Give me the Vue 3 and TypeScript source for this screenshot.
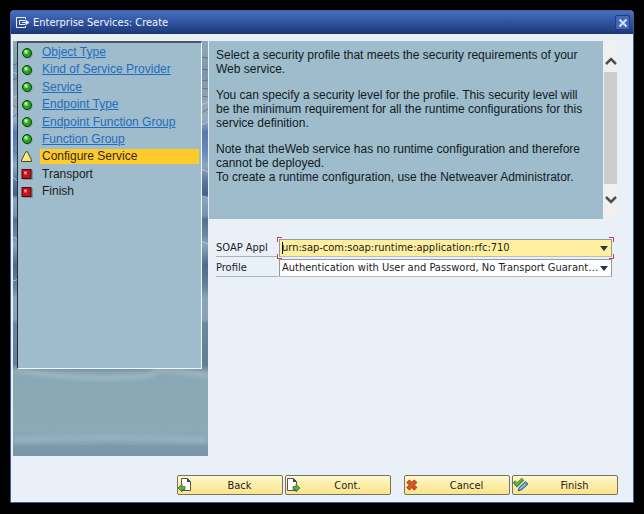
<script setup lang="ts">
import { ref } from 'vue'

type Status = 'done' | 'current' | 'open'
interface Step { label: string; status: Status }

const steps: Step[] = [
  { label: 'Object Type', status: 'done' },
  { label: 'Kind of Service Provider', status: 'done' },
  { label: 'Service', status: 'done' },
  { label: 'Endpoint Type', status: 'done' },
  { label: 'Endpoint Function Group', status: 'done' },
  { label: 'Function Group', status: 'done' },
  { label: 'Configure Service', status: 'current' },
  { label: 'Transport', status: 'open' },
  { label: 'Finish', status: 'open' },
]

const soapOptions: string[] = ['urn:sap-com:soap:runtime:application:rfc:710']
const profileOptions: string[] = ['Authentication with User and Password, No Transport Guarantee']
const soap = ref(soapOptions[0])
const profile = ref(profileOptions[0])
</script>

<template>
  <main class="window">
    <header class="titlebar">
      <svg class="title-icon" width="14" height="12" viewBox="0 0 14 12" fill="none" stroke="#e8eefa" aria-hidden="true">
        <path d="M9.500 2V.5H.5v10h9V9" />
        <path d="M9 3.500H3.500v4H9" />
        <path d="M6 5.500h5" />
        <path d="M9.500 2.500l4 3-4 3z" fill="#e8eefa" stroke="none" />
      </svg>
      <h1>Enterprise Services: Create</h1>
      <button class="close" type="button" aria-label="Close">
        <svg width="8" height="8" viewBox="0 0 8 8" stroke="#d5e2ff" stroke-width="2" aria-hidden="true"><path d="M0.500 0.500l7 7M7.500 0.500l-7 7" /></svg>
      </button>
    </header>

    <div class="body">
      <aside class="side">
        <svg class="waves" viewBox="0 0 195 415" preserveAspectRatio="none" aria-hidden="true">
          <defs>
            <linearGradient id="sea" x1="0" y1="0" x2="0" y2="1">
              <stop offset="0" stop-color="#8fa9b8" />
              <stop offset="0.08" stop-color="#8095a8" />
              <stop offset="0.15" stop-color="#95a6b6" />
              <stop offset="0.19" stop-color="#9aabbb" />
              <stop offset="0.22" stop-color="#5a78b0" />
              <stop offset="0.27" stop-color="#6c8abb" />
              <stop offset="0.3" stop-color="#8fa9bd" />
              <stop offset="0.34" stop-color="#5a7499" />
              <stop offset="0.37" stop-color="#46608c" />
              <stop offset="0.38" stop-color="#8aa4b8" />
              <stop offset="0.42" stop-color="#7893ae" />
              <stop offset="0.43" stop-color="#56718f" />
              <stop offset="0.47" stop-color="#6d89a6" />
              <stop offset="0.49" stop-color="#8ba6b9" />
              <stop offset="0.54" stop-color="#4f6a8c" />
              <stop offset="0.59" stop-color="#64809b" />
              <stop offset="0.62" stop-color="#8ca6b6" />
              <stop offset="0.67" stop-color="#88a1b3" />
              <stop offset="0.68" stop-color="#6c879c" />
              <stop offset="0.78" stop-color="#627e93" />
              <stop offset="0.8" stop-color="#8aa7b5" />
              <stop offset="0.94" stop-color="#8ca9b6" />
              <stop offset="1" stop-color="#7897a8" />
            </linearGradient>
            <filter id="soft" x="-10%" y="-100%" width="120%" height="300%"><feGaussianBlur stdDeviation="2" /></filter>
          </defs>
          <rect width="195" height="415" fill="url(#sea)" />
          <g stroke="#4a5f7c" opacity=".6">
            <path d="M0 24l6-2M0 39l6-3M0 64l6 4M0 76l6-5M0 109l6 5M0 150l6 4" />
            <path d="M188 16l7 1M188 28l7 1M188 40l7-1M188 47l7 1M188 55l7 1M188 72l7-4" />
          </g>
          <g stroke="#c0d0dd" opacity=".8">
            <path d="M0 31l6 3M0 57l6-3M0 136l6 6M0 196l6 3M0 240l6-2" />
            <path d="M188 64l7-3M188 84l7-3M188 128l7 3M188 155l7 2M188 200l7 3" />
          </g>
          <g fill="none" filter="url(#soft)">
            <path d="M0 328Q50 338 96 337T140 332M140 329Q170 329 195 335" stroke="#a9becb" stroke-width="4" opacity=".8" />
            <path d="M0 399Q90 395 195 399" stroke="#9bb6c5" stroke-width="6" opacity=".8" />
          </g>
          <rect y="404" width="195" height="11" fill="#7896a8" opacity=".5" />
        </svg>
        <nav class="steps" aria-label="Wizard steps">
          <ul>
            <li v-for="s in steps" :key="s.label">
              <svg width="12" height="12" viewBox="0 0 12 12" aria-hidden="true">
                <template v-if="s.status === 'done'">
                  <circle cx="7" cy="7" r="4.500" fill="#58706d" opacity=".6" />
                  <circle cx="6" cy="6" r="4.500" fill="#24a31f" stroke="#153c16" />
                  <circle cx="5.200" cy="5" r="2.300" fill="#6be055" />
                  <circle cx="4.800" cy="4.500" r="1" fill="#edffe5" />
                </template>
                <template v-else-if="s.status === 'current'">
                  <path d="M5 .7h1.500l4 8.300v1.500h-10V9z" fill="#f9e66b" stroke="#4d482b" />
                  <path d="M5.300 2.500L3 8" stroke="#fff9c2" />
                </template>
                <template v-else>
                  <rect x="2" y="2" width="10" height="10" fill="#667983" opacity=".6" />
                  <rect x="1" y="1.500" width="9" height="9" fill="#c71318" stroke="#4d080c" />
                  <rect x="3" y="3.500" width="3" height="3" fill="#f16b6b" />
                  <rect x="3.500" y="4" width="1" height="1" fill="#fff" />
                </template>
              </svg>
              <a v-if="s.status === 'done'" href="#">{{ s.label }}</a>
              <span v-else :class="{ current: s.status === 'current' }">{{ s.label }}</span>
            </li>
          </ul>
        </nav>
      </aside>

      <section class="content">
        <div class="info">
          <div class="text">
            <p>Select a security profile that meets the security requirements of your<br>Web service.</p>
            <p>You can specify a security level for the profile. This security level will<br>be the minimum requirement for all the runtime configurations for this<br>service definition.</p>
            <p>Note that theWeb service has no runtime configuration and therefore<br>cannot be deployed.<br>To create a runtime configuration, use the Netweaver Administrator.</p>
          </div>
          <div class="scroll">
            <button type="button" aria-label="Scroll up">
              <svg width="12" height="8" viewBox="0 0 12 8" fill="none" stroke="#505050" stroke-width="2.500" aria-hidden="true"><path d="M1 7l5-5 5 5" /></svg>
            </button>
            <div class="thumb"></div>
            <button type="button" aria-label="Scroll down">
              <svg width="12" height="8" viewBox="0 0 12 8" fill="none" stroke="#505050" stroke-width="2.500" aria-hidden="true"><path d="M1 1l5 5 5-5" /></svg>
            </button>
          </div>
        </div>

        <form class="form" @submit.prevent>
          <div class="row">
            <label for="soap">SOAP Appl</label>
            <div class="field focused">
              <select id="soap" v-model="soap"><option v-for="o in soapOptions" :key="o">{{ o }}</option></select>
              <svg class="arrow" width="8" height="5" viewBox="0 0 8 5" aria-hidden="true"><path d="M0 0h8L4 5z" fill="#26384a" /></svg>
              <i class="corner tl"></i><i class="corner tr"></i><i class="corner bl"></i><i class="corner br"></i>
              <i class="caret"></i>
            </div>
          </div>
          <div class="row">
            <label for="profile">Profile</label>
            <div class="field">
              <select id="profile" v-model="profile"><option v-for="o in profileOptions" :key="o">{{ o }}</option></select>
              <svg class="arrow" width="8" height="5" viewBox="0 0 8 5" aria-hidden="true"><path d="M0 0h8L4 5z" fill="#26384a" /></svg>
            </div>
          </div>
        </form>
      </section>
    </div>

    <footer class="actions">
      <div class="pair">
        <button type="button">
          <svg width="16" height="16" viewBox="0 0 16 16" aria-hidden="true">
            <path d="M3.500 1.500h6l3 3v9h-9z" fill="#fff" stroke="#555" /><path d="M9 1v4h4z" fill="#444" />
            <path d="M0 11l4-4v2.500h3v3H4V15z" fill="#68a93f" stroke="#35782a" stroke-width=".8" />
          </svg><span>Back</span>
        </button>
        <button type="button">
          <svg width="16" height="16" viewBox="0 0 16 16" aria-hidden="true">
            <path d="M1.500 1.500h6l3 3v9h-9z" fill="#fff" stroke="#555" /><path d="M7 1v4h4z" fill="#444" />
            <path d="M14 11l-4-4v2.500H7v3h3V15z" fill="#68a93f" stroke="#35782a" stroke-width=".8" />
          </svg><span>Cont.</span>
        </button>
      </div>
      <div class="pair">
        <button type="button">
          <svg width="16" height="16" viewBox="0 0 16 16" aria-hidden="true">
            <path d="M2.800 4l8 8M10.800 4l-8 8" stroke="#a63d19" stroke-width="4.400" />
            <path d="M3.300 4.500l7 7M10.300 4.500l-7 7" stroke="#d95828" stroke-width="3" />
          </svg><span>Cancel</span>
        </button>
        <button type="button">
          <svg width="16" height="16" viewBox="0 0 16 16" fill="none" aria-hidden="true">
            <path d="M1 4.500l3 3.500 6-6" stroke="#397e30" stroke-width="3.500" /><path d="M1.500 4.500L4 7.500 9.500 2" stroke="#69b04a" stroke-width="2" />
            <path d="M5 14l1.500-4 6-5.500 2.500 2.500-6 5.500z" fill="#5f9fd0" stroke="#2c638e" /><path d="M7.500 11.500l5-4.500" stroke="#a9d2ee" />
          </svg><span>Finish</span>
        </button>
      </div>
    </footer>
  </main>
</template>

<style>
html, body, #app { height: 100%; }
body { margin: 0; background: #000; }
#app { box-sizing: border-box; padding: 10px 10px 11px; }
</style>

<style scoped>
* { box-sizing: border-box; }
.window {
  display: flex;
  flex-direction: column;
  min-height: 100%;
  border: 1px solid #3d5f9f;
  border-radius: 4px 4px 0 0;
  background: #e9f0f8;
  color: #1c1c1c;
  font: 11px/16px "DejaVu Sans Condensed", "DejaVu Sans", sans-serif;
  overflow: hidden;
}
.titlebar {
  display: flex;
  flex: none;
  align-items: center;
  gap: 3px;
  height: 23px;
  padding: 0 3px 0 5px;
  background: linear-gradient(#4a6fbd, #355ba9 35%, #26458c 75%, #1c3671);
  color: #f1f5ff;
}
h1 { flex: 1; margin: 0; font-size: 11px; font-weight: 400; }
.close {
  display: grid;
  place-items: center;
  width: 15px;
  height: 15px;
  padding: 0;
  border: 1px solid #1f3c80;
  border-radius: 2px;
  background: #4468b4;
}
.body { display: flex; flex: none; gap: 1px; padding: 7px 0 0 2px; }
.side { position: relative; width: 195px; height: 415px; padding: 0 6px 0 4px; }
.waves { position: absolute; inset: 0; width: 100%; height: 100%; }
.steps {
  position: relative;
  height: 328px;
  border: 1px solid #f2f6f8;
  border-top: 2px solid #4b5864;
  border-left-color: #26303c;
  background: #9ebccc;
  font: 12px/15px "Liberation Sans", Arial, sans-serif;
}
ul { display: grid; grid-auto-rows: 15px; align-content: space-between; height: 156px; margin: 0; padding: 2px 2px 0 3px; list-style: none; }
li { display: flex; align-items: center; gap: 7px; }
li svg { flex: none; }
li a, li span { flex: 1; padding-left: 2px; white-space: nowrap; }
li a { color: #226cc0; }
.current { background: #ffca2c; color: #322a12; }
.content { flex: 1; min-width: 0; }
.info { display: flex; height: 178px; padding-right: 15px; }
.text { flex: 1; padding: 7px; background: #9ebccb; color: #111a22; font: 12px/14px "Liberation Sans", Arial, sans-serif; white-space: nowrap; }
p { margin: 0 0 12px; }
.scroll { display: flex; flex-direction: column; width: 15px; background: #f0f0f0; }
.scroll button { display: grid; place-items: center; height: 31px; padding: 8px 0 0; border: 0; background: none; }
.scroll button:last-child { padding: 0 0 4px; height: 35px; }
.thumb { flex: 1; margin: 0 1px; background: #cdcdcd; }
.form { display: grid; gap: 2px; padding: 20px 21px 0 7px; }
.row { display: flex; height: 18px; }
label { width: 62px; padding-top: 1px; border-bottom: 1px solid #aab2ba; margin-right: 1px; white-space: nowrap; }
.field { position: relative; flex: 1; min-width: 0; border: 1px solid #8f9aa3; border-bottom-color: #b5bcc2; background: #fff; }
.focused { background: #ffef9f; }
select {
  display: block;
  width: 100%;
  height: 100%;
  padding: 0 12px 0 2px;
  border: 0;
  outline: 0;
  appearance: none;
  background: transparent;
  color: inherit;
  font: inherit;
  text-overflow: ellipsis;
}
.arrow { position: absolute; right: 3px; top: 6px; pointer-events: none; }
.caret { position: absolute; left: 2px; top: 2px; width: 1px; height: 12px; background: #111; }
.corner { position: absolute; width: 5px; height: 5px; border: 0 solid #bd4048; }
.tl { left: -3px; top: -3px; border-width: 1px 0 0 1px; }
.tr { right: -3px; top: -3px; border-width: 1px 1px 0 0; }
.bl { left: -3px; bottom: -3px; border-width: 0 0 1px 1px; }
.br { right: -3px; bottom: -3px; border-width: 0 1px 1px 0; }
.actions { display: flex; justify-content: flex-end; gap: 13px; margin-top: auto; padding: 0 15px 7px 0; }
.pair { display: flex; gap: 2px; }
.actions button {
  display: flex;
  align-items: center;
  width: 106px;
  height: 20px;
  padding: 0;
  border: 1px solid #76725e;
  border-radius: 2px;
  background: linear-gradient(#fff8d2, #fdeeaa 45%, #fbe38c);
  color: #262218;
  font: inherit;
}
.actions span { flex: 1; padding: 2px 0 0 3px; text-align: center; }
</style>
